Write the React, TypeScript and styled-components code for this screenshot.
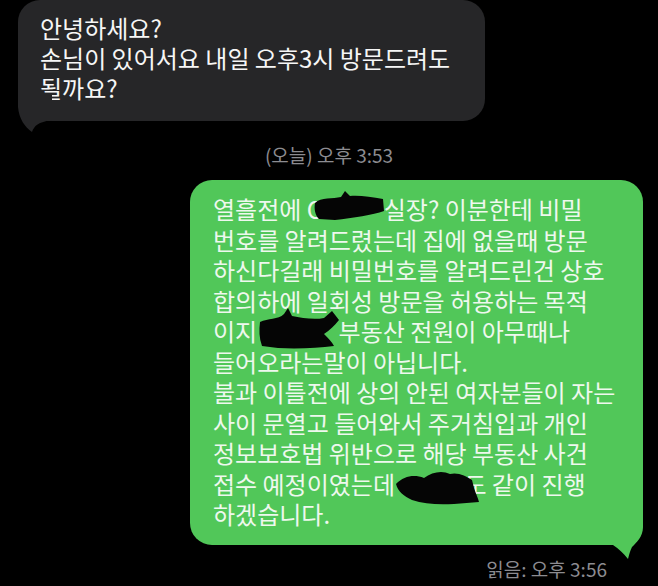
import React from "react";
import styled, { createGlobalStyle } from "styled-components";

const Global = createGlobalStyle`
  html, body { margin: 0; padding: 0; background: #000; }
  body { font-family: "Noto Sans CJK KR", "Noto Sans", sans-serif; }
`;

const Page = styled.div`
  width: 658px;
  height: 586px;
  background: #000;
  display: flex;
  flex-direction: column;
  overflow: hidden;
`;

const Bubble = styled.div<{ $variant: "in" | "out" }>`
  position: relative;
  box-sizing: border-box;
  border-radius: 22px;
  font-size: 24px;
  white-space: nowrap;
  ${(p) =>
    p.$variant === "in"
      ? `
    align-self: flex-start;
    margin-left: 18px;
    width: 467px;
    height: 121px;
    background: #262628;
    color: #f6f6f6;
    padding: 13px 0 0 22px;
    line-height: 30px;
  `
      : `
    align-self: flex-end;
    margin-right: 15px;
    margin-top: 14px;
    width: 453px;
    height: 365px;
    background: #51c759;
    color: #eef8ee;
    padding: 14px 0 0 23px;
    line-height: 30.5px;
  `}
`;

const Line = styled.div`
  display: block;
`;

const Stamp = styled.div<{ $align: "center" | "right" }>`
  font-size: 19px;
  line-height: 22px;
  color: #8c8c91;
  ${(p) =>
    p.$align === "center"
      ? `align-self: center; margin-top: 23px;`
      : `align-self: flex-end; margin-right: 51px; margin-top: 13px;`}
`;

const Tail = styled.svg<{ $side: "left" | "right" }>`
  position: absolute;
  ${(p) =>
    p.$side === "left"
      ? `left: 0; top: 95px; width: 34px; height: 40px;`
      : `left: 415px; top: 335px; width: 40px; height: 46px;`}
`;

const Redact = styled.span<{ $w: number }>`
  position: relative;
  display: inline-block;
  width: ${(p) => p.$w}px;
  height: 1em;
  vertical-align: baseline;
  white-space: nowrap;
`;

const Blob = styled.svg`
  position: absolute;
  overflow: visible;
`;

type BlobProps = { x: number; y: number; w: number; h: number; d: string };
const Scribble = ({ x, y, w, h, d }: BlobProps) => (
  <Blob style={{ left: x, top: y, width: w, height: h }} viewBox={`0 0 ${w} ${h}`}>
    <path d={d} fill="#050505" />
  </Blob>
);

export default function App() {
  return (
    <>
      <Global />
      <Page>
        <Bubble $variant="in">
          <Line>안녕하세요?</Line>
          <Line>손님이 있어서요 내일 오후3시 방문드려도</Line>
          <Line>될까요?</Line>
          <Tail $side="left" viewBox="0 0 34 40">
            <path d="M0 0 L0 12 C1 24 7 32 14 37 C16 31 20 27 34 25 L34 0 Z" fill="#262628" />
          </Tail>
        </Bubble>
        <Stamp $align="center">(오늘) 오후 3:53</Stamp>
        <Bubble $variant="out">
          <Line>
            열흘전에{" "}
            <Redact $w={77}>
              O
              <Scribble
                x={6}
                y={-3}
                w={72}
                h={30}
                d="M2 12 C8 6 20 8 28 6 L32 0 L37 5 C46 4 58 6 70 8 L71 20 C60 24 40 27 22 29 L6 28 C2 24 1 18 2 12 Z"
              />
            </Redact>
            실장? 이분한테 비밀
          </Line>
          <Line>번호를 알려드렸는데 집에 없을때 방문</Line>
          <Line>하신다길래 비밀번호를 알려드린건 상호</Line>
          <Line>합의하에 일회성 방문을 허용하는 목적</Line>
          <Line>
            이지{" "}
            <Redact $w={76}>
              <Scribble
                x={-5}
                y={-9}
                w={82}
                h={42}
                d="M2 14 C10 10 20 12 26 6 L30 0 L34 8 C44 10 56 12 66 10 L74 3 L81 12 C76 18 72 22 66 26 C70 30 74 34 76 38 C60 40 40 41 20 40 L4 38 C1 30 1 22 2 14 Z"
              />
            </Redact>
            부동산 전원이 아무때나
          </Line>
          <Line>들어오라는말이 아닙니다.</Line>
          <Line>불과 이틀전에 상의 안된 여자분들이 자는</Line>
          <Line>사이 문열고 들어와서 주거침입과 개인</Line>
          <Line>정보보호법 위반으로 해당 부동산 사건</Line>
          <Line>
            접수 예정이였는데{" "}
            <Redact $w={64}>
              <Scribble
                x={-6}
                y={-2}
                w={86}
                h={38}
                d="M2 16 C10 8 20 6 30 10 C38 4 48 2 56 6 C64 4 72 8 78 12 L80 20 C82 26 84 30 85 34 L60 36 C44 37 30 36 18 32 C10 28 4 24 2 16 Z"
              />
            </Redact>
            도 같이 진행
          </Line>
          <Line>하겠습니다.</Line>
          <Tail $side="right" viewBox="0 0 40 46">
            <path d="M38 0 L38 12 C38 22 31 28 27 32 C25 36 24 40 23 44 C18 38 14 34 8 30 L0 30 L0 0 Z" fill="#51c759" />
          </Tail>
        </Bubble>
        <Stamp $align="right">읽음: 오후 3:56</Stamp>
      </Page>
    </>
  );
}
